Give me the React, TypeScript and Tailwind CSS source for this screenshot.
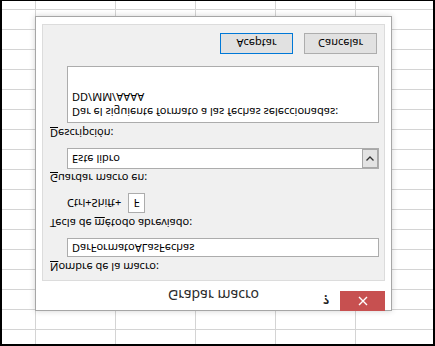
import React from "react";

const font = { fontFamily: '"Noto Sans", "Open Sans", sans-serif' };

// spreadsheet behind the dialog
function SheetRow({ first }: { first?: boolean }) {
  return (
    <div
      className={
        first
          ? "flex h-[14px] shrink-0"
          : "flex h-[20px] shrink-0 border-t border-[#d4d4d4]"
      }
    >
      <div className="w-[33px] shrink-0" />
      <div className="w-[80px] shrink-0 border-l border-[#d4d4d4]" />
      <div className="w-[80px] shrink-0 border-l border-[#d4d4d4]" />
      <div className="w-[80px] shrink-0 border-l border-[#d4d4d4]" />
      <div className="w-[80px] shrink-0 border-l border-[#d4d4d4]" />
      <div className="flex-1 border-l border-[#d4d4d4]" />
    </div>
  );
}

function Label({ children }: { children: React.ReactNode }) {
  return <div className="mt-[7px] h-[16px] leading-[16px]">{children}</div>;
}

function Key({ k }: { k: string }) {
  return <span className="underline underline-offset-[1px]">{k}</span>;
}

export default function App() {
  const rows = Array.from({ length: 17 });

  return (
    <div
      className="relative h-[346px] w-[435px] -scale-y-100 overflow-hidden border-x-2 border-t-2 border-b border-black bg-white text-[11px] text-black"
      style={font}
    >
      <div className="flex h-full flex-col">
        <SheetRow first />
        {rows.map((_, i) => (
          <SheetRow key={i} />
        ))}
      </div>

      {/* dialog */}
      <div className="absolute left-[33px] top-[33px] flex h-[295px] w-[357px] flex-col border border-[#a6a6a6] bg-white shadow-[0_0_6px_rgba(0,0,0,0.18)]">
        {/* title bar */}
        <div className="grid h-[29px] shrink-0 grid-cols-[1fr_auto_1fr]">
          <div />
          <div className="pt-[6px] text-[14px] leading-[18px] text-[#2b2b2b]">
            Grabar macro
          </div>
          <div className="flex items-start justify-end pr-[6px]">
            <span className="mr-[11px] mt-[3px] text-[12px] font-bold leading-[16px] text-[#222]">
              ?
            </span>
            <button className="-mt-px flex h-[20px] w-[45px] items-center justify-center bg-[#c75050] text-white">
              <svg width="10" height="10" viewBox="0 0 10 10">
                <path
                  d="M1 1 L9 9 M9 1 L1 9"
                  stroke="white"
                  strokeWidth="1.4"
                  fill="none"
                />
              </svg>
            </button>
          </div>
        </div>

        {/* body */}
        <div className="mx-[6px] flex h-[257px] shrink-0 flex-col border border-[#dcdcdc] bg-[#f0f0f0] pl-[7px] pr-[5px]">
          <div className="mt-[5px] h-[16px] leading-[16px]">
            <Key k="N" />
            ombre de la macro:
          </div>
          <div className="ml-[17px] mt-[2px] flex h-[19px] items-center border border-[#acacac] bg-white pl-[4px]">
            DarFormatoALasFechas
          </div>

          <Label>
            Tecla de <Key k="m" />
            étodo abreviado:
          </Label>
          <div className="ml-[17px] mt-[2px] flex h-[20px] items-center">
            <span className="w-[61px]">Ctrl+Shift+</span>
            <div className="flex h-[20px] w-[17px] items-center justify-center border border-[#acacac] bg-white">
              F
            </div>
          </div>

          <Label>
            <Key k="G" />
            uardar macro en:
          </Label>
          <div className="ml-[17px] mt-[1px] flex h-[21px] items-center border border-[#acacac] bg-white pl-[4px]">
            <span className="flex-1">Este libro</span>
            <div className="flex h-[19px] w-[16px] items-center justify-center border border-[#a8a8a8] bg-[#e3e3e3]">
              <svg width="8" height="5" viewBox="0 0 8 5">
                <path
                  d="M0.5 0.5 L4 4 L7.5 0.5"
                  stroke="#333"
                  strokeWidth="1.3"
                  fill="none"
                />
              </svg>
            </div>
          </div>

          <Label>
            <Key k="D" />
            escripción:
          </Label>
          <div className="ml-[17px] mt-[2px] h-[57px] border border-[#acacac] bg-white pl-[4px] pt-[2px] leading-[15px]">
            <div>Dar el siguiente formato a las fechas seleccionadas:</div>
            <div>DD/MM/AAAA</div>
          </div>

          <div className="mt-[12px] flex justify-end gap-[11px] pr-[2px]">
            <button className="h-[21px] w-[73px] border border-[#0078d7] bg-[#e1e1e1] leading-[19px]">
              Aceptar
            </button>
            <button className="h-[21px] w-[73px] border border-[#adadad] bg-[#e1e1e1] leading-[19px]">
              Cancelar
            </button>
          </div>
        </div>
      </div>
    </div>
  );
}
